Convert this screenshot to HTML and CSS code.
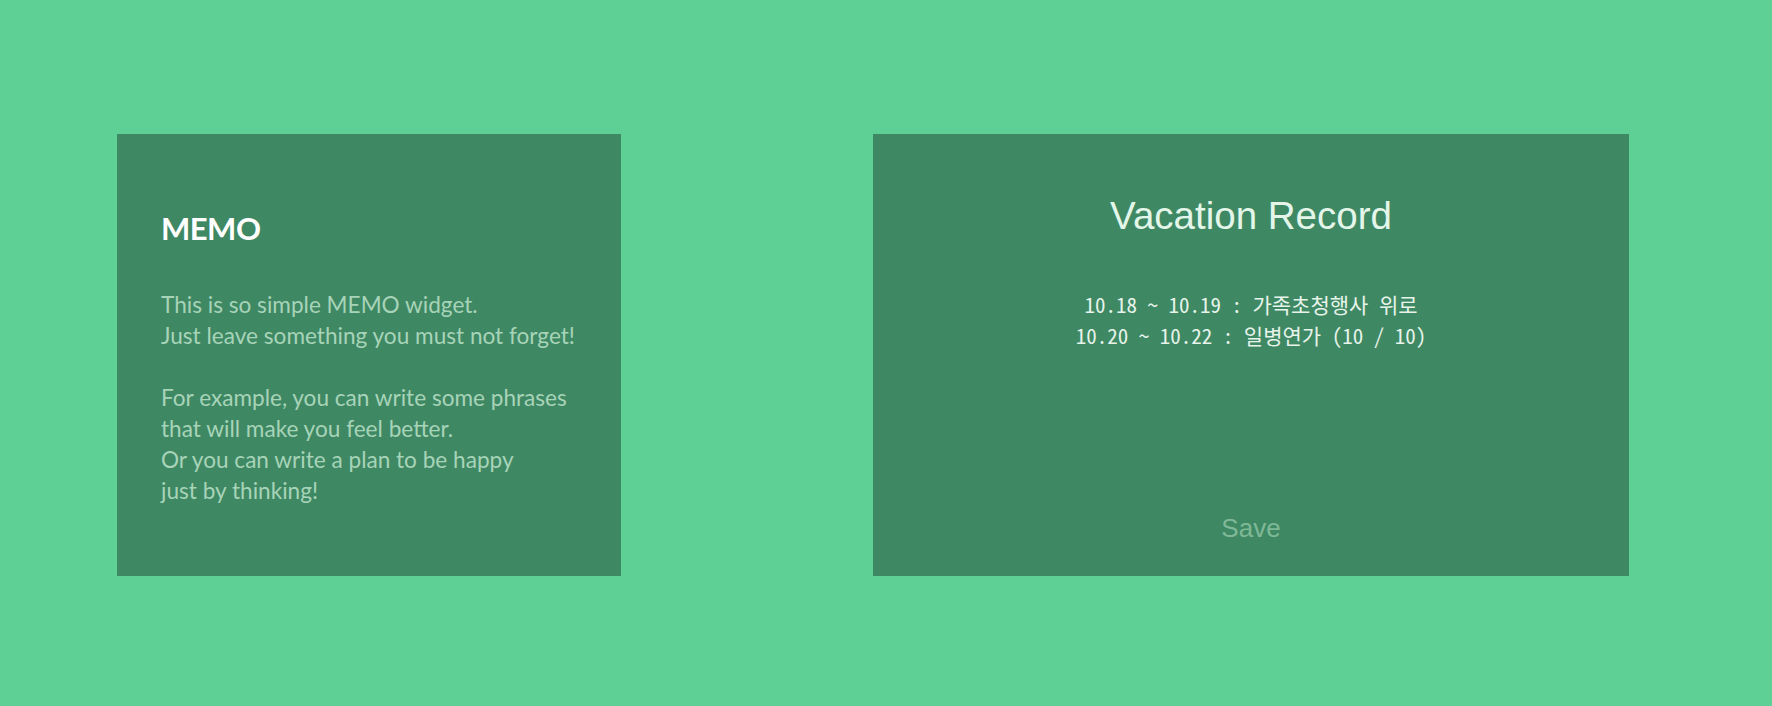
FILE: index.html
```html
<!DOCTYPE html>
<html lang="en">
<head>
<meta charset="utf-8">
<title>Widgets</title>
<link rel="stylesheet" href="styles.css">
</head>
<body>
<main class="board">
  <section class="card memo">
    <h1 class="memo-title">MEMO</h1>
    <div class="memo-body">
      <p>This is so simple MEMO widget.<br>Just leave something you must not forget!</p>
      <p>For example, you can write some phrases<br>that will make you feel better.<br>Or you can write a plan to be happy<br>just by thinking!</p>
    </div>
  </section>
  <section class="card vacation">
    <h2 class="vacation-title">Vacation Record</h2>
    <ul class="vacation-list">
      <li>10.18 ~ 10.19 : 가족초청행사 위로</li>
      <li>10.20 ~ 10.22 : 일병연가 (10 / 10)</li>
    </ul>
    <button class="save" type="button">Save</button>
  </section>
</main>
</body>
</html>
```

FILE: styles.css
```css
html, body {
  margin: 0;
  padding: 0;
}
body {
  background: #5ecf95;
  width: 1772px;
  height: 706px;
  overflow: hidden;
}
.board {
  display: flex;
  align-items: flex-start;
  gap: 252px;
  padding: 134px 0 0 117px;
}
.card {
  background: #3f8864;
  height: 442px;
  box-sizing: border-box;
}
.memo {
  width: 504px;
  padding: 74px 0 0 44px;
  font-family: Lato, "Noto Sans", sans-serif;
}
.memo-title {
  margin: 0;
  font-size: 31px;
  line-height: 40px;
  font-weight: 700;
  letter-spacing: -0.5px;
  color: #ffffff;
}
.memo-body {
  margin-top: 41px;
  display: flex;
  flex-direction: column;
  gap: 31px;
  color: #a7d4b8;
  font-size: 22.6px;
  line-height: 31px;
}
.memo-body p {
  margin: 0;
}
.vacation {
  width: 756px;
  padding: 62px 0 34px;
  display: flex;
  flex-direction: column;
  align-items: center;
}
.vacation-title {
  margin: 0;
  font-family: "Liberation Sans", Arial, sans-serif;
  font-weight: 400;
  font-size: 38.5px;
  line-height: 40px;
  color: #e3f6e9;
}
.vacation-list {
  list-style: none;
  margin: 53px 0 0;
  padding: 0;
  text-align: center;
  font-family: "Noto Sans Mono CJK KR", "Liberation Mono", "Noto Sans CJK KR", monospace;
  font-size: 21px;
  line-height: 31px;
  color: #e6f4ea;
}
.save {
  margin-top: auto;
  background: transparent;
  border: 0;
  padding: 0;
  font-family: "Liberation Sans", Arial, sans-serif;
  font-size: 26px;
  line-height: 28px;
  color: #7fb896;
  cursor: pointer;
}
```
